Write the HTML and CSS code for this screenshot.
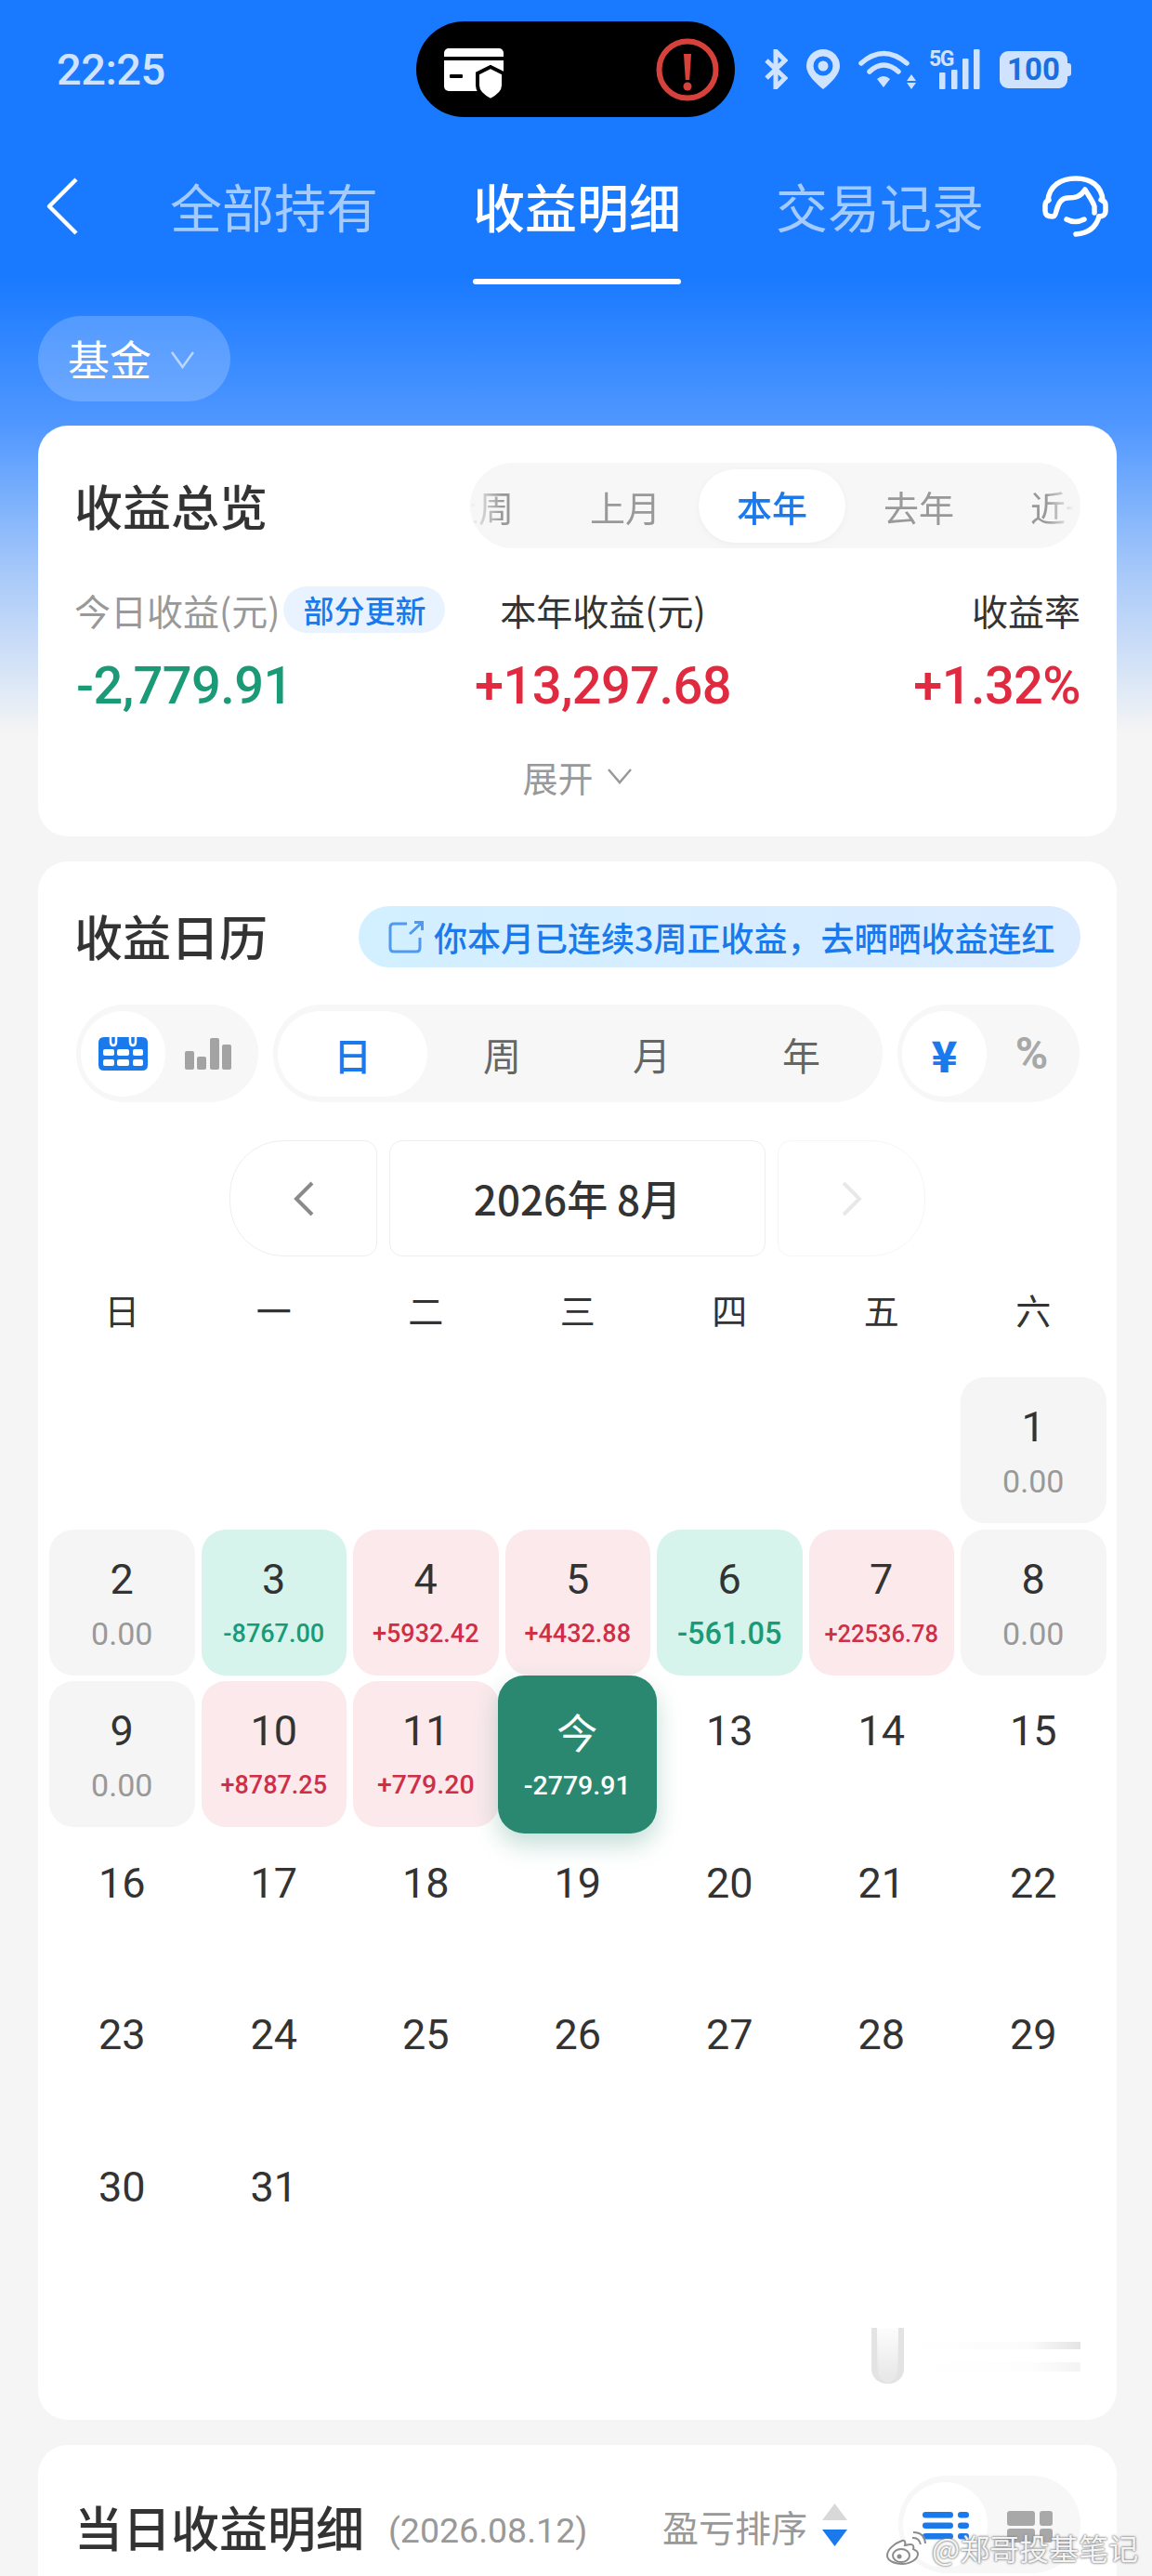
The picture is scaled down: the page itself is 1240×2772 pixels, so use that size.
FILE: index.html
```html
<!DOCTYPE html>
<html lang="zh-CN">
<head>
<meta charset="utf-8">
<title>收益明细</title>
<link rel="stylesheet" href="styles.css">
</head>
<body>
<div class="page">
  <div class="status">
    <div class="time">22:25</div>
    <div class="island">
      <svg class="ic-card" viewBox="0 0 64 56"><rect width="64" height="46" rx="5" fill="#fff"/><rect y="9" width="64" height="4" fill="#000"/><rect x="6" y="28" width="14" height="4" rx="1" fill="#000"/><path d="M50 20L64 27V40C64 48 56 53 50 56C44 53 36 48 36 40V27Z" fill="#fff" stroke="#000" stroke-width="4"/></svg>
      <svg class="ic-alert" viewBox="0 0 70 70"><circle cx="35" cy="35" r="30.500" fill="none" stroke="#d6423b" stroke-width="6"/><path d="M31 18h8l-1.800 28h-4.400z" fill="#d6423b"/><circle cx="35" cy="53" r="4.500" fill="#d6423b"/></svg>
    </div>
    <div class="sys">
      <svg class="ic-bt" viewBox="0 0 26 43"><path d="M3 12L23 31L13 41V2L23 12L3 31" fill="none" stroke="#cfe3ff" stroke-width="5"/></svg>
      <svg class="ic-loc" viewBox="0 0 36 43"><path d="M18 0C8 0 0 8 0 18C0 28 12 38 18 43C24 38 36 28 36 18C36 8 28 0 18 0Z" fill="#cfe3ff"/><circle cx="18" cy="18" r="8" fill="none" stroke="#1a7aff" stroke-width="5"/></svg>
      <svg class="ic-wifi" viewBox="0 0 62 42"><g fill="none" stroke="#cfe3ff" stroke-width="5.500" stroke-linecap="round"><path d="M3 14Q27 -7 52 14"/><path d="M12 23Q27 9 43 23"/></g><path d="M27 40L20 31Q27 25 34 31Z" fill="#cfe3ff"/><path d="M57 26L62 33H52ZM52 35H62L57 42Z" fill="#cfe3ff"/></svg>
      <svg class="ic-sig" viewBox="0 -6 55 49"><text x="0" y="18" class="sig-text">5G</text><g fill="#cfe3ff"><rect x="11" y="25" width="6.500" height="18" rx="1"/><rect x="24" y="22" width="6.500" height="21" rx="1"/><rect x="36" y="10" width="6.500" height="33" rx="1"/><rect x="48" y="0" width="6.500" height="43" rx="1"/></g></svg>
      <div class="battery">100</div>
    </div>
  </div>

  <div class="nav">
    <svg class="ic-back" viewBox="0 0 36 62"><path d="M33 2L4 31L33 60" fill="none" stroke="#fff" stroke-width="4.500" stroke-linejoin="round"/></svg>
    <div class="tabs">
      <div class="tab">全部持有</div>
      <div class="tab tab-on">收益明细</div>
      <div class="tab">交易记录</div>
    </div>
    <svg class="ic-help" viewBox="0 0 71 66"><g fill="none" stroke="#fff" stroke-width="5.500" stroke-linecap="round" stroke-linejoin="round"><path d="M6 27C7 11 20 3 36 3C52 3 64 11 65 27"/><path d="M7 26C4 27 3 29 3 32V38C3 42 6 44 11 44C13 44 14 43 15 38C17 30 20 24 27 24C35 24 41 23 46 15C50 22 54 27 56 33V40M63 26C67 27 68 29 68 32V38C68 42 65 44 61 44"/><path d="M61 44C58 55 50 62 36 63"/><path d="M26 47Q35 52 45 47"/></g></svg>
  </div>

  <div class="filter">基金<svg class="ic-chev-s" viewBox="0 0 27 20"><path d="M2 2L13.500 18L25 2" fill="none" stroke="#bcd6ff" stroke-width="2.500"/></svg></div>

  <section class="card card-sum">
    <div class="sum-head">
      <h2 class="title">收益总览</h2>
      <div class="seg">
        <div class="seg-window">
          <div class="seg-track">
            <span class="seg-item">上周</span>
            <span class="seg-item">上月</span>
            <span class="seg-item seg-on">本年</span>
            <span class="seg-item">去年</span>
            <span class="seg-item">近一年</span>
          </div>
        </div>
      </div>
    </div>
    <div class="metrics">
      <div class="metric">
        <div class="m-label m-muted">今日收益(元)<span class="tag">部分更新</span></div>
        <div class="m-val green">-2,779.91</div>
      </div>
      <div class="metric m-center">
        <div class="m-label">本年收益(元)</div>
        <div class="m-val red">+13,297.68</div>
      </div>
      <div class="metric m-right">
        <div class="m-label">收益率</div>
        <div class="m-val red">+1.32%</div>
      </div>
    </div>
    <div class="expand">展开<svg class="ic-chev-e" viewBox="0 0 28 18"><path d="M2 2L14 16L26 2" fill="none" stroke="#999" stroke-width="2.500"/></svg></div>
  </section>

  <section class="card card-cal">
    <div class="cal-head">
      <h2 class="title">收益日历</h2>
      <div class="share">
        <svg class="ic-share" viewBox="0 0 38 35"><path d="M20 3H6Q2 3 2 7V29Q2 33 6 33H30Q34 33 34 29V18" fill="none" stroke="#4f9af0" stroke-width="3"/><path d="M23 14L36 2M28 1.500H36.500V10" fill="none" stroke="#4f9af0" stroke-width="3"/></svg>
        <span>你本月已连续3周正收益，去晒晒收益连红</span>
      </div>
    </div>
    <div class="tools">
      <div class="toggle toggle-2">
        <span class="tg-item tg-on"><svg class="ic-cal" viewBox="0 0 53 36"><path d="M6 0H47Q53 0 53 6V30Q53 36 47 36H6Q0 36 0 30V6Q0 0 6 0Z" fill="#1a7aec"/><g fill="none" stroke="#fff" stroke-width="2.500"><path d="M13 0V5Q13 9 16 9Q19 9 19 5V0M34 0V5Q34 9 37 9Q40 9 40 5V0"/></g><g fill="#fff"><rect x="5" y="13" width="12" height="7" rx="2"/><rect x="20" y="13" width="13" height="7" rx="2"/><rect x="37" y="13" width="11" height="7" rx="2"/><rect x="5" y="24" width="12" height="7" rx="2"/><rect x="20" y="24" width="13" height="7" rx="2"/><rect x="37" y="24" width="11" height="7" rx="2"/></g></svg></span>
        <span class="tg-item"><svg class="ic-bars" viewBox="0 0 50 34"><g fill="#a3a3a3"><rect y="14" width="10" height="20" rx="2"/><rect x="13" y="20" width="10" height="14" rx="2"/><rect x="27" width="10" height="34" rx="2"/><rect x="40" y="7" width="10" height="27" rx="2"/></g></svg></span>
      </div>
      <div class="toggle toggle-range">
        <span class="rg-item rg-on">日</span>
        <span class="rg-item">周</span>
        <span class="rg-item">月</span>
        <span class="rg-item">年</span>
      </div>
      <div class="toggle toggle-2">
        <span class="tg-item tg-on tg-yen">¥</span>
        <span class="tg-item tg-pct">%</span>
      </div>
    </div>
    <div class="month">
      <div class="mo-btn mo-prev"><svg class="ic-mo" viewBox="0 0 26 38"><path d="M22 2L5 19L22 36" fill="none" stroke="#8a8a8a" stroke-width="4"/></svg></div>
      <div class="mo-mid">2026年 8月</div>
      <div class="mo-btn mo-next"><svg class="ic-mo" viewBox="0 0 26 38"><path d="M4 2L21 19L4 36" fill="none" stroke="#e8e8e8" stroke-width="4"/></svg></div>
    </div>
    <div class="week">
      <span>日</span><span>一</span><span>二</span><span>三</span><span>四</span><span>五</span><span>六</span>
    </div>
    <div class="days">
      <div></div><div></div><div></div><div></div><div></div><div></div>
      <div class="day flat"><b>1</b><i class="v34">0.00</i></div>

      <div class="day flat"><b>2</b><i class="v34">0.00</i></div>
      <div class="day down"><b>3</b><i class="v28">-8767.00</i></div>
      <div class="day up"><b>4</b><i class="v28">+5932.42</i></div>
      <div class="day up"><b>5</b><i class="v28">+4432.88</i></div>
      <div class="day down"><b>6</b><i class="v32">-561.05</i></div>
      <div class="day up"><b>7</b><i class="v26">+22536.78</i></div>
      <div class="day flat"><b>8</b><i class="v34">0.00</i></div>

      <div class="day flat"><b>9</b><i class="v34">0.00</i></div>
      <div class="day up"><b>10</b><i class="v28">+8787.25</i></div>
      <div class="day up"><b>11</b><i class="v30">+779.20</i></div>
      <div class="day today"><b>今</b><i class="v30">-2779.91</i></div>
      <div class="day"><b>13</b></div>
      <div class="day"><b>14</b></div>
      <div class="day"><b>15</b></div>

      <div class="day"><b>16</b></div>
      <div class="day"><b>17</b></div>
      <div class="day"><b>18</b></div>
      <div class="day"><b>19</b></div>
      <div class="day"><b>20</b></div>
      <div class="day"><b>21</b></div>
      <div class="day"><b>22</b></div>

      <div class="day"><b>23</b></div>
      <div class="day"><b>24</b></div>
      <div class="day"><b>25</b></div>
      <div class="day"><b>26</b></div>
      <div class="day"><b>27</b></div>
      <div class="day"><b>28</b></div>
      <div class="day"><b>29</b></div>

      <div class="day"><b>30</b></div>
      <div class="day"><b>31</b></div>
    </div>
    <div class="ghost">
      <div class="ghost-u"></div>
      <div class="ghost-l1"></div>
      <div class="ghost-l2"></div>
    </div>
  </section>

  <section class="card card-detail">
    <h2 class="title">当日收益明细</h2>
    <span class="d-date">(2026.08.12)</span>
    <span class="d-sort">盈亏排序</span>
    <svg class="ic-sort" viewBox="0 0 27 46"><path d="M13.500 0L27 18H0Z" fill="#d8d8d8"/><path d="M0 28H27L13.500 46Z" fill="#1a7aec"/></svg>
    <div class="toggle toggle-2 toggle-detail">
      <span class="tg-item tg-on"><svg class="ic-list" viewBox="0 0 50 32"><g fill="#1a7aec"><rect width="33" height="6.500" rx="3.200"/><rect x="38" width="12" height="6.500" rx="3.200"/><rect y="11.500" width="33" height="6.500" rx="3.200"/><rect x="38" y="11.500" width="12" height="6.500" rx="3.200"/><rect y="23" width="33" height="6.500" rx="3.200"/><rect x="38" y="23" width="12" height="6.500" rx="3.200"/></g></svg></span>
      <span class="tg-item"><svg class="ic-grid" viewBox="0 0 49 34"><g fill="#a8a8a8"><rect width="30" height="16" rx="3"/><rect x="35" width="14" height="16" rx="3"/><rect y="19" width="30" height="15" rx="3"/><rect x="35" y="19" width="14" height="15" rx="3"/></g></svg></span>
    </div>
  </section>

  <div class="mark">
    <svg class="ic-weibo" viewBox="0 0 44 36"><g fill="#fff" stroke="#8c8c8c" stroke-width="2"><path d="M18 10C9 13 2 20 2 26C2 31 9 35 18 35C27 35 35 30 35 24C35 21 32 20 30 19C31 16 30 14 27 14C24 14 22 15 21 15C22 12 21 9 18 10Z"/><ellipse cx="17" cy="26" rx="9" ry="7"/></g><circle cx="15" cy="27" r="2.500" fill="#8c8c8c"/><path d="M29 7Q36 6 38 14M30 1Q42 1 43 13" fill="none" stroke="#8c8c8c" stroke-width="2"/></svg>
    <span>@郑哥投基笔记</span>
  </div>
</div>
</body>
</html>
```
FILE: styles.css
```css
* { box-sizing: border-box; }
html, body { margin: 0; padding: 0; }
body {
  width: 1240px;
  height: 2772px;
  overflow: hidden;
  font-family: "Noto Sans CJK SC", "Noto Sans", sans-serif;
  color: #333;
}
svg { display: block; flex: none; }

.page {
  position: relative;
  width: 1240px;
  height: 2772px;
  overflow: hidden;
  padding-top: 23px;
  background: linear-gradient(180deg, #1a7aff 0, #1a7aff 300px, #5198ff 460px, #a9caf9 620px, #f5f5f5 790px);
}

/* status bar */
.status { display: flex; align-items: center; height: 103px; padding-left: 61px; }
.time {
  width: 387px;
  font: 500 47px/1 Roboto, sans-serif;
  letter-spacing: -0.5px;
  color: #cfe3ff;
}
.island {
  display: flex;
  align-items: center;
  justify-content: space-between;
  width: 343px;
  height: 103px;
  padding: 10px 16px 0 30px;
  border-radius: 52px;
  background: #000;
}
.ic-card { width: 64px; height: 56px; }
.ic-alert { width: 70px; height: 70px; margin-top: -10px; }
.sys { display: flex; align-items: center; margin-left: 31px; }
.ic-bt { width: 26px; height: 43px; }
.ic-loc { width: 36px; height: 43px; margin-left: 20px; }
.ic-wifi { width: 62px; height: 42px; margin-left: 20px; }
.ic-sig { width: 55px; height: 49px; margin: -6px 0 0 14px; }
.sig-text { font: 700 23px Roboto, sans-serif; fill: #cfe3ff; letter-spacing: -1.5px; }
.battery {
  position: relative;
  width: 73px;
  height: 40px;
  margin-left: 21px;
  border-radius: 9px;
  background: #cfe3ff;
  color: #1a6fe0;
  font: 700 33px/40px Roboto, sans-serif;
  text-align: center;
}
.battery::after {
  content: "";
  position: absolute;
  right: -4px;
  top: 13px;
  width: 4px;
  height: 14px;
  border-radius: 0 3px 3px 0;
  background: #cfe3ff;
}

/* top tabs */
.nav {
  display: flex;
  height: 133px;
  margin-top: 47px;
  padding-left: 49px;
}
.ic-back { width: 36px; height: 62px; margin-top: 18px; }
.tabs { display: flex; gap: 102px; margin-left: 98px; }
.tab {
  width: 224px;
  font-size: 56px;
  line-height: 96px;
  white-space: nowrap;
  text-align: center;
  color: #a3cbff;
}
.tab-on { font-weight: 500; color: #fff; }
.tab-on::after {
  content: "";
  display: block;
  height: 6px;
  margin-top: 31px;
  border-radius: 3px;
  background: #fff;
}
.ic-help { width: 71px; height: 66px; margin: 16px 0 0 63px; }

/* filter chip */
.filter {
  display: flex;
  align-items: center;
  width: 207px;
  height: 92px;
  margin: 34px 0 0 41px;
  padding-left: 32px;
  border-radius: 46px;
  background: rgba(255, 255, 255, 0.2);
  color: #fff;
  font-size: 45px;
  line-height: 92px;
}
.ic-chev-s { width: 27px; height: 20px; margin: 2px 0 0 20px; }

/* cards */
.card {
  width: 1161px;
  margin: 27px 0 0 41px;
  padding: 0 39px 0 41px;
  border-radius: 32px;
  background: #fff;
}
.title {
  margin: 0 0 0 -2px;
  font-size: 52px;
  font-weight: 500;
  line-height: 70px;
  white-space: nowrap;
  color: #333;
}

.card-sum { height: 442px; margin-top: 26px; padding-top: 40px; }
.sum-head { display: flex; align-items: center; justify-content: space-between; height: 92px; }
.seg {
  width: 657px;
  height: 92px;
  border-radius: 46px;
  background: #f7f7f7;
  overflow: hidden;
}
.seg-window {
  height: 92px;
  overflow: hidden;
  -webkit-mask-image: linear-gradient(90deg, transparent 0, #000 34px, #000 620px, transparent 650px);
  mask-image: linear-gradient(90deg, transparent 0, #000 34px, #000 620px, transparent 650px);
}
.seg-track { display: flex; align-items: center; height: 92px; margin-left: -70px; }
.seg-item {
  flex: none;
  height: 79px;
  padding: 0 41px;
  font-size: 38px;
  line-height: 79px;
  white-space: nowrap;
  text-align: center;
  color: #999;
}
.seg-on { border-radius: 40px; background: #fff; color: #1a7aec; font-weight: 500; box-shadow: 0 2px 8px rgba(0, 0, 0, 0.04); }

.metrics { display: grid; grid-template-columns: 395px 344px 1fr; margin-top: 41px; }
.metric { display: flex; flex-direction: column; }
.m-center { align-items: center; }
.m-right { align-items: flex-end; }
.m-label { display: flex; align-items: center; height: 50px; font-size: 39px; white-space: nowrap; color: #333; }
.m-muted { color: #999; margin-left: -2px; }
.tag {
  height: 50px;
  margin-left: 4px;
  padding: 0 21px;
  border-radius: 25px;
  background: #e9f3ff;
  color: #1a7aec;
  font-size: 33px;
  font-weight: 500;
  line-height: 50px;
}
.m-val {
  height: 70px;
  margin-top: 22px;
  font: 500 56px/70px Roboto, sans-serif;
  letter-spacing: -0.6px;
  white-space: nowrap;
}
.green { color: #1a9a76; }
.red { color: #df2a40; }
.expand {
  display: flex;
  align-items: center;
  justify-content: center;
  height: 50px;
  margin-top: 37px;
  color: #999;
  font-size: 38px;
  padding-right: 2px;
}
.ic-chev-e { width: 28px; height: 18px; margin: 0 0 0 14px; }

.card-cal { position: relative; height: 1677px; padding-top: 48px; }
.cal-head { display: flex; align-items: center; justify-content: space-between; height: 66px; }
.cal-head .title { margin-top: -3px; }
.share {
  display: flex;
  align-items: center;
  width: 777px;
  height: 66px;
  padding-left: 32px;
  border-radius: 33px;
  background: linear-gradient(90deg, #d2f0ff, #dcebff);
  color: #1a7aec;
  font-size: 36px;
  font-weight: 500;
  white-space: nowrap;
}
.ic-share { width: 38px; height: 35px; margin-right: 11px; }

.tools { display: flex; gap: 16px; margin-top: 40px; }
.toggle {
  display: flex;
  align-items: center;
  height: 105px;
  padding: 0 5px;
  border-radius: 52px;
  background: #f7f7f7;
}
.toggle-2 { width: 196px; }
.tg-item { display: flex; align-items: center; justify-content: center; flex: none; width: 91px; height: 92px; }
.tg-on { border-radius: 46px; background: #fff; }
.ic-cal { width: 53px; height: 36px; }
.ic-bars { width: 50px; height: 34px; }
.tg-yen { font: 900 46px/92px "Noto Sans CJK SC", sans-serif; color: #1a7aec; }
.tg-pct { font: 700 48px/92px Roboto, sans-serif; color: #a8a8a8; margin-left: 3px; }
.toggle-range { width: 656px; }
.rg-item {
  flex: none;
  width: 161px;
  height: 92px;
  font-size: 41px;
  line-height: 92px;
  text-align: center;
  color: #666;
}
.rg-on { border-radius: 46px; background: #fff; color: #1a7aec; font-weight: 500; }

.month { display: flex; gap: 13px; margin-top: 41px; padding-left: 165px; }
.mo-btn { display: flex; align-items: center; justify-content: center; width: 159px; height: 125px; }
.mo-prev { border: 1px solid #eee; border-radius: 58px 14px 14px 58px; }
.mo-next { border: 1px solid #f6f6f6; border-radius: 14px 58px 58px 14px; }
.ic-mo { width: 26px; height: 38px; }
.mo-mid {
  width: 405px;
  height: 125px;
  border: 1px solid #eee;
  border-radius: 14px;
  font-size: 44px;
  font-weight: 500;
  line-height: 123px;
  text-align: center;
}

.week, .days {
  display: grid;
  grid-template-columns: repeat(7, 156.500px);
  column-gap: 7px;
  margin-left: -29px;
}
.week { height: 50px; margin-top: 32px; font-size: 38px; line-height: 50px; text-align: center; color: #333; }
.days { grid-auto-rows: 157px; row-gap: 6.500px; margin-top: 48px; }
.day { display: flex; flex-direction: column; align-items: center; padding-top: 30px; border-radius: 26px; }
.day b { font: 400 45px/48px Roboto, sans-serif; color: #333; }
.day i { margin-top: 16px; font: 500 30px/36px Roboto, sans-serif; white-space: nowrap; }
.day i.v26 { font-size: 25.500px; }
.day i.v28 { font-size: 27px; }
.day i.v30 { font-size: 28.500px; }
.day i.v32 { font-size: 32.500px; }
.day i.v34 { font-size: 34px; font-weight: 400; }
.flat { background: #f5f5f5; }
.flat i { color: #999; }
.down { background: #d6f4ec; }
.down i { color: #1a9a76; }
.up { background: #fbe9ec; }
.up i { color: #cf2f46; }
.today {
  position: relative;
  z-index: 1;
  margin: -6px -7px -7px -8px;
  padding-top: 36px;
  border-radius: 28px;
  background: #2a8870;
  box-shadow: 0 12px 26px rgba(42, 136, 112, 0.28);
}
.day.today b { font-family: "Noto Sans CJK SC", sans-serif; color: #fff; font-size: 44px; }
.day.today i { margin-top: 17px; color: #fff; }

/* faint ghost marks near the bottom of the calendar */
.ghost { position: absolute; left: 897px; top: 1578px; width: 225px; height: 62px; }
.ghost-u {
  position: absolute;
  left: 0;
  top: 0;
  width: 35px;
  height: 60px;
  border-radius: 0 0 16px 16px;
  background:
    linear-gradient(180deg, rgba(255, 255, 255, 0.9) 0, rgba(255, 255, 255, 0) 90%),
    linear-gradient(90deg, #dcdcdc 0, #e0e0e0 18%, #e8e8e8 24%, #e8e8e8 76%, #e0e0e0 82%, #dcdcdc 100%);
  box-shadow: inset 6px 0 0 #e3e3e3, inset -6px 0 0 #e3e3e3;
}
.ghost-l1 {
  position: absolute;
  left: 39px;
  top: 15px;
  width: 186px;
  height: 8px;
  background: linear-gradient(90deg, #fff, #fbfbfb 70%, #e4e4e4);
}
.ghost-l2 {
  position: absolute;
  left: 39px;
  top: 37px;
  width: 186px;
  height: 10px;
  background: linear-gradient(90deg, #fff, #fdfdfd 70%, #f4f4f4);
}

.card-detail { display: flex; align-items: flex-start; height: 300px; padding-top: 33px; }
.card-detail .title { margin-top: 20px; }
.d-date { margin: 35px 0 0 26px; font: 400 37.500px/48px Roboto, sans-serif; color: #999; white-space: nowrap; }
.d-sort { margin: 27px 0 0 auto; font-size: 39px; line-height: 54px; color: #999; white-space: nowrap; }
.ic-sort { width: 27px; height: 46px; margin: 30px 0 0 16px; }
.toggle-detail { margin-left: 55px; }
.ic-list { width: 50px; height: 32px; margin-top: 4px; }
.ic-grid { width: 49px; height: 34px; margin-top: 4px; }

/* watermark */
.mark { position: absolute; left: 953px; top: 2723px; display: flex; align-items: center; height: 37px; }
.ic-weibo { width: 44px; height: 36px; }
.mark span {
  margin-left: 6px;
  color: #f4f4f4;
  font-size: 32px;
  line-height: 37px;
  white-space: nowrap;
  text-shadow: 0 0 2px #6d6d6d, 0 0 3px #8a8a8a;
}
```
